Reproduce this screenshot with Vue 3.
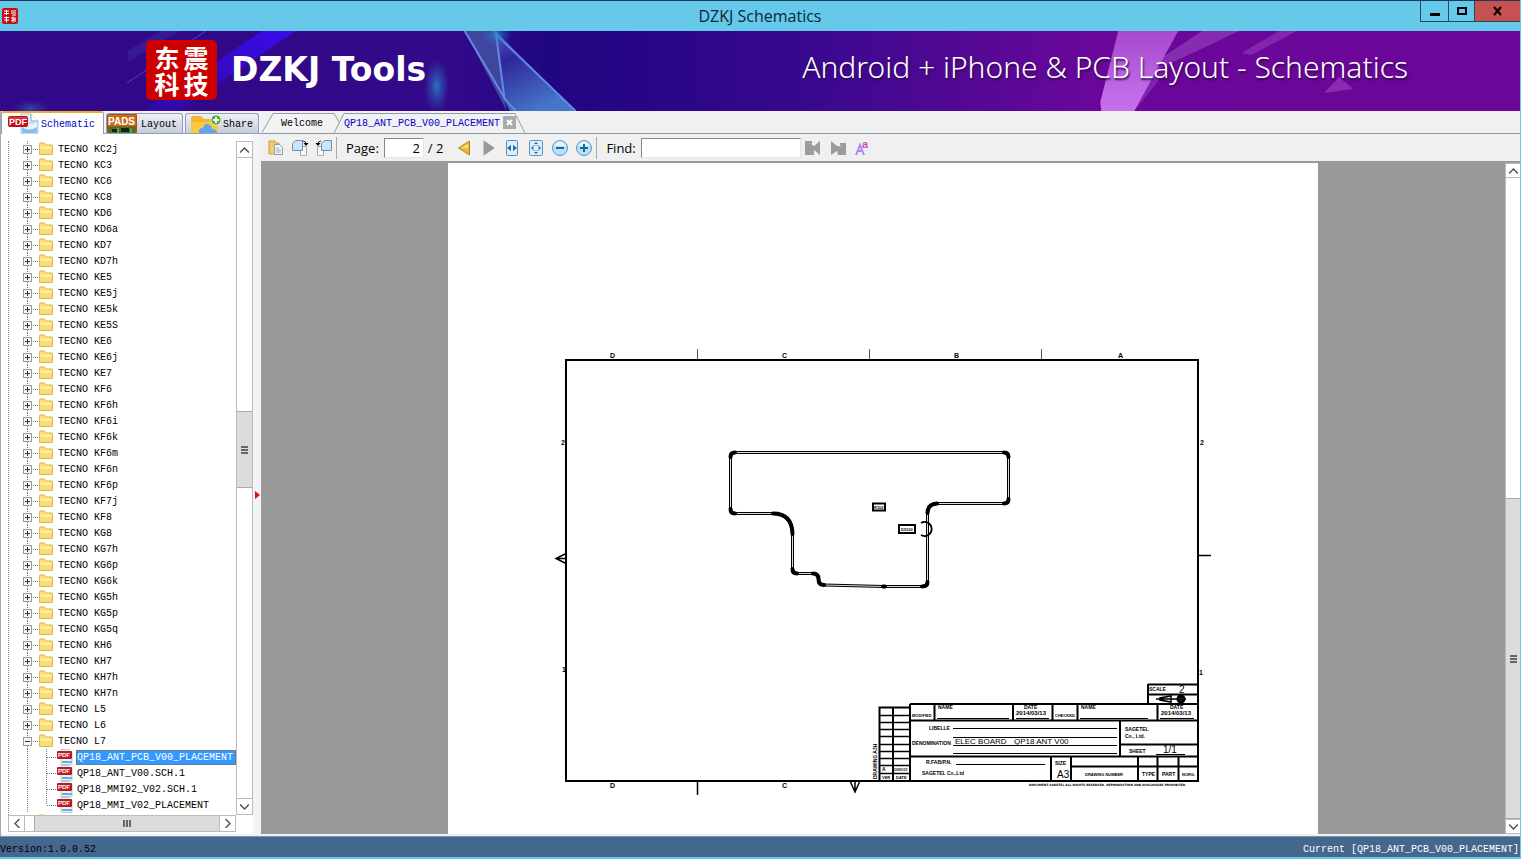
<script setup>
import { ref } from 'vue'

const folders = [
  'KC2j', 'KC3', 'KC6', 'KC8', 'KD6', 'KD6a', 'KD7', 'KD7h', 'KE5', 'KE5j', 'KE5k', 'KE5S', 'KE6',
  'KE6j', 'KE7', 'KF6', 'KF6h', 'KF6i', 'KF6k', 'KF6m', 'KF6n', 'KF6p', 'KF7j', 'KF8', 'KG8', 'KG7h',
  'KG6p', 'KG6k', 'KG5h', 'KG5p', 'KG5q', 'KH6', 'KH7', 'KH7h', 'KH7n', 'L5', 'L6', 'L7'
].map((name) => ({ name: 'TECNO ' + name, open: name === 'L7' }))

const files = ['QP18_ANT_PCB_V00_PLACEMENT', 'QP18_ANT_V00.SCH.1', 'QP18_MMI92_V02.SCH.1', 'QP18_MMI_V02_PLACEMENT']
const current = ref(files[0])
const page = ref('2')
const search = ref('')

const outline =
  'M735 452.5H1004Q1008.5 452.5 1008.5 457V499Q1008.5 503.5 1004 503.5H937Q927.5 504 927.5 514V582Q927.5 586.5 922 586.5H884L824 585Q818.500 585 818.500 579Q818.500 573.500 813 573.500H797Q792.500 573.500 792.500 569V534Q792 513.5 773 513.5H735Q730.500 513.5 730.500 509V457Q730.500 452.500 735 452.500Z'
const corners =
  'M1004 452.5Q1008.500 452.500 1008.500 457M1008.500 499Q1008.500 503.500 1004 503.500M937 503.500Q927.500 504 927.500 513M927.500 582Q927.500 586.5 922 586.5M883 586.5h2M824 585Q818.500 585 818.500 579Q818.500 573.500 813 573.500M797 573.500Q792.500 573.500 792.500 569M792.500 534Q792 513.5 773 513.5M735 513.5Q730.500 513.5 730.500 509M730.500 457Q730.500 452.500 735 452.500'
const revisionRows = [715, 722, 729, 736, 744, 751, 758, 765, 773]
</script>

<template>
  <div class="app">
    <header class="titlebar">
      <svg class="app-icon" viewBox="0 0 16 16" width="16" height="16">
        <rect width="16" height="16" rx="2" fill="#c01010" />
        <path d="M2 3h5M4.500 2v5M2 5.500h5M9 3h5M9 5h5M10 7h4M2 9.500h5M4.500 8.500v6M2 12h5M9 10h5M11 8.500v6M9 13l5-2M13 12v2" stroke="#fff" stroke-width="1" fill="none" />
      </svg>
      <h1>DZKJ Schematics</h1>
      <div class="window-buttons">
        <button class="min" aria-label="Minimize"><svg width="10" height="10"><path d="M0 7h10v3H0z" /></svg></button>
        <button class="max" aria-label="Maximize"><svg width="12" height="10"><path d="M2 2h8v6H2z" fill="none" stroke="#000" stroke-width="2" /></svg></button>
        <button class="close" aria-label="Close"><svg width="10" height="10"><path d="M1 1l7 8M8 1L1 9" fill="none" stroke="#000" stroke-width="2" /></svg></button>
      </div>
    </header>

    <div class="banner">
      <svg class="art" viewBox="0 0 1521 80" preserveAspectRatio="none">
        <defs>
          <linearGradient id="base">
            <stop offset="0" stop-color="#310888" /><stop offset=".3" stop-color="#320989" />
            <stop offset=".36" stop-color="#200681" /><stop offset=".42" stop-color="#270586" />
            <stop offset=".53" stop-color="#38088f" /><stop offset=".66" stop-color="#5a0896" />
            <stop offset=".72" stop-color="#6a079a" /><stop offset="1" stop-color="#6c0698" />
          </linearGradient>
          <linearGradient id="shard" x2=".5" y2="1">
            <stop offset="0" stop-color="#4b58be" /><stop offset=".35" stop-color="#30269b" /><stop offset="1" stop-color="#4576c8" />
          </linearGradient>
          <linearGradient id="beam" x2="0" y2="1">
            <stop offset="0" stop-color="#a749cc" /><stop offset="1" stop-color="#c873f0" />
          </linearGradient>
          <linearGradient id="ray" x1="1" x2="0" y2="1">
            <stop offset="0" stop-color="#3b0bef" /><stop offset="1" stop-color="#3408c0" stop-opacity=".5" />
          </linearGradient>
          <radialGradient id="glow"><stop offset="0" stop-color="#278fc6" stop-opacity=".8" /><stop offset="1" stop-color="#2a5dc0" stop-opacity="0" /></radialGradient>
        </defs>
        <rect width="1521" height="80" fill="url(#base)" />
        <path d="M262 0H296L178 80H143Z" fill="url(#ray)" />
        <path d="M160 0h20L128 31V20z" fill="#4b48ba" opacity=".25" />
        <path d="M206 0L127 52" stroke="#7067cc" opacity=".6" />
        <ellipse cx="437" cy="55" rx="13" ry="28" fill="url(#glow)" />
        <ellipse cx="31" cy="78" rx="19" ry="10" fill="url(#glow)" opacity=".6" />
        <path d="M465 0H496L507 80Z" fill="#40469e" />
        <path d="M496 0L576 80H510L505 69Z" fill="url(#shard)" />
        <path d="M465 0L506 69L516 80M496 0L505 69M496 3L576 80" stroke="#6588e4" stroke-width="2" fill="none" />
        <ellipse cx="497" cy="4" rx="16" ry="12" fill="url(#glow)" />
        <path d="M1203 0H1240L1155 40 1131 70 1150 35Z" fill="#9440bd" opacity=".65" />
        <path d="M1280 0H1298L1252 24 1242 22Z" fill="#963fbc" opacity=".55" />
        <path d="M1119 0H1179L1135 80H1102L1101 71Z" fill="url(#beam)" />
        <path d="M1102 72L1150 44 1170 36 1135 80H1102Z" fill="#bd6ae3" opacity=".3" />
        <path d="M1340 46L1325 62 1354 58Z" fill="#9d3fbf" opacity=".65" />
      </svg>
      <div class="seal"><span>东</span><span>震</span><span>科</span><span>技</span></div>
      <strong>DZKJ Tools</strong>
      <p>Android + iPhone &amp; PCB Layout - Schematics</p>
    </div>

    <main>
      <aside>
        <nav class="source-tabs">
          <button class="schematic active">
            <svg width="34" height="21" viewBox="0 0 34 21">
              <path d="M14 1h10l7 7v13H14z" fill="#e6f2fc" stroke="#a6c6df" /><path d="M24 1v7h7" fill="#fff" stroke="#7ba6c9" />
              <path d="M15 14q7 5 15 0v6H15z" fill="#88bee8" /><path d="M17 7h5M17 10h10" stroke="#9abfdd" />
              <rect x="1" y="3" width="20" height="11" rx="2" fill="#c30f18" /><path d="M2 4h18v3H2z" fill="#e5555a" opacity=".6" />
              <text x="2" y="12" font-size="9" font-weight="700" fill="#fff">PDF</text>
            </svg>
            <span>Schematic</span>
          </button>
          <button class="layout">
            <svg width="30" height="19" viewBox="0 0 30 19">
              <rect width="30" height="19" rx="1" fill="#a7550f" /><rect x="1" y="1" width="28" height="11" fill="#c56d17" />
              <text x="1" y="11" font-size="10" font-weight="700" fill="#fff">PADS</text>
              <path d="M2 13h26v6H2z" fill="#347b30" /><path d="M5 15h5v3H5zM14 14h8v4h-8z" fill="#17231a" /><path d="M11 14v5M24 14v5" stroke="#8cc35b" />
            </svg>
            <span>Layout</span>
          </button>
          <button class="share">
            <svg width="32" height="19" viewBox="0 0 32 19">
              <path d="M1 4q0-2 2-2h8l3 3h12q2 0 2 2v12H1z" fill="#f3b62c" /><path d="M1 8h27v11H1z" fill="#fac943" />
              <path d="M9 19q-1-5 4-5 2-6 7-3 2 2 2 4 5 0 5 4z" fill="#5ba8ed" />
              <circle cx="26" cy="6" r="5" fill="#49a63d" stroke="#d5efd0" /><path d="M26 3v6M23 6h6" stroke="#fff" stroke-width="2" />
            </svg>
            <span>Share</span>
          </button>
        </nav>
        <div class="tree-panel">
          <ul class="tree">
            <li v-for="folder in folders" :key="folder.name" class="folder">
              <button>
                <svg width="31" height="16" viewBox="0 0 31 16">
                  <path d="M4.500 0v4M4.500 13v3M10 8.500h6" stroke="#777" stroke-dasharray="1 1" />
                  <rect x=".5" y="4.500" width="8" height="8" fill="#f5f5f5" stroke="#999" />
                  <path :d="folder.open ? 'M2 8.500h5' : 'M2 8.500h5M4.500 6v5'" stroke="#333" />
                  <path d="M16.500 3q0-1 1-1h4l1 2h6q1 0 1 1v8.500h-13z" fill="#f8df74" stroke="#dbb94e" /><path d="M17.500 5h11v3h-11z" fill="#fff1a6" opacity=".7" />
                </svg>
                <span>{{ folder.name }}</span>
              </button>
            </li>
            <li v-for="(file, i) in files" :key="file" class="file">
              <button :class="{ selected: current === file }" @click="current = file">
                <svg width="53" height="16" viewBox="0 0 53 16">
                  <path d="M24 8.500h10" stroke="#777" stroke-dasharray="1 1" /><path d="M4.500 0v16" stroke="#777" stroke-dasharray="1 1" />
                  <path :d="i === files.length - 1 ? 'M23.500 0v8' : 'M23.500 0v16'" stroke="#777" stroke-dasharray="1 1" />
                  <path d="M38 .500h8l3 3v12H38z" fill="#e8f2fc" stroke="#b3cde4" /><path d="M39 13h10" stroke="#6faadb" stroke-width="2" />
                  <rect x="34" y="2" width="15" height="8" rx="1" fill="#bb1a1e" />
                  <text x="35" y="8" font-size="6" font-weight="700" fill="#fff">PDF</text>
                </svg>
                <span>{{ file }}</span>
              </button>
            </li>
            <li class="folder"><button><svg width="31" height="16" viewBox="0 0 31 16"><path d="M16 1h5l1 2h6v11H16z" fill="#f8df74" /></svg></button></li>
          </ul>
          <div class="scroll vertical tree-v">
            <button aria-label="Scroll up"><svg width="9" height="6"><path d="M0 5.500L4.500 1 9 5.500" /></svg></button>
            <div class="track before"></div>
            <div class="thumb"><i></i></div>
            <div class="track after"></div>
            <button aria-label="Scroll down"><svg width="9" height="6"><path d="M0 .500L4.500 5 9 .500" /></svg></button>
          </div>
          <div class="scroll horizontal">
            <button aria-label="Scroll left"><svg width="6" height="9"><path d="M5.500 0L1 4.500 5.500 9" /></svg></button>
            <div class="thumb"><i></i></div>
            <button aria-label="Scroll right"><svg width="6" height="9"><path d="M.500 0L5 4.500.500 9" /></svg></button>
          </div>
        </div>
        <button class="splitter" aria-label="Toggle sidebar"><svg width="6" height="8"><path d="M1 0l5 4-5 4z" fill="#e01010" /></svg></button>
      </aside>

      <section class="document">
        <nav class="doc-tabs">
          <button class="welcome">
            <svg width="80" height="21" viewBox="0 0 80 21"><path d="M0 20.500L11 1.500H72L80 15" fill="#f3f3f3" stroke="#8c9dac" /></svg>
            <span>Welcome</span>
          </button>
          <div class="placement">
            <svg width="194" height="21" viewBox="0 0 194 21"><path d="M0 21L10 1.500H181L191 21" fill="#f1f1f1" stroke="#8c9dac" /></svg>
            <button class="label">QP18_ANT_PCB_V00_PLACEMENT</button>
            <button class="x" aria-label="Close tab"><svg width="13" height="13"><rect width="13" height="13" fill="#aaa" /><path d="M4 4l5 5M9 4L4 9" stroke="#fff" stroke-width="2" /></svg></button>
          </div>
        </nav>

        <div class="toolbar">
          <button aria-label="Copy"><svg width="16" height="16"><path d="M1 1h6v2h4v11H1z" fill="#f2cb78" stroke="#c99c3e" /><path d="M6.500 4.500h5l3 3v7h-8z" fill="#f5f8fb" stroke="#8b9dac" /><path d="M8 8h3M8 10h5M8 12h5" stroke="#91aac0" /></svg></button>
          <button aria-label="Rotate right"><svg width="18" height="18"><path d="M9.500 7.500h6v9h-6z" fill="#f8f8f8" stroke="#a8a8a8" /><path d="M1.500 4.500l3-3h7v10h-10z" fill="#cae3f8" stroke="#718dab" /><path d="M12 2q3 0 3 3" fill="none" stroke="#222" /><path d="M12.500 4h5L15 7z" /></svg></button>
          <button aria-label="Rotate left"><svg width="18" height="18"><path d="M2.500 7.500h6v9h-6z" fill="#f8f8f8" stroke="#a8a8a8" /><path d="M6.500 4.500l3-3h7v10h-10z" fill="#cae3f8" stroke="#718dab" /><path d="M6 2Q3 2 3 5" fill="none" stroke="#222" /><path d="M.500 4h5L3 7z" /></svg></button>
          <i class="sep"></i>
          <label for="page">Page:</label>
          <input id="page" v-model="page" type="text" />
          <span class="total">/ 2</span>
          <button aria-label="Previous page"><svg width="16" height="16"><path d="M13.500 1v14L2.500 8z" fill="#e6bd3a" stroke="#ae8519" /><path d="M12 4v4H5z" fill="#f7e27b" /></svg></button>
          <button aria-label="Next page"><svg width="16" height="16"><path d="M4 1l10 7-10 7z" fill="#999" stroke="#999" /></svg></button>
          <button aria-label="Fit width"><svg width="14" height="16"><rect x="1.500" y=".500" width="11" height="15" rx="1" fill="#d9edfb" stroke="#5c92bf" /><path d="M6 5v6L2 8zM8 5v6l4-3z" fill="#216aab" /></svg></button>
          <button aria-label="Fit page"><svg width="16" height="16"><rect x="1.500" y=".500" width="13" height="15" rx="1" fill="#d9edfb" stroke="#5c92bf" /><path d="M6 4l2-2 2 2zM6 12l2 2 2-2zM5 6L3 8l2 2zM11 6l2 2-2 2z" fill="#216aab" /><path d="M5.500 5.500h5v5h-5z" fill="none" stroke="#6697bd" stroke-dasharray="1 1" /></svg></button>
          <button aria-label="Zoom out"><svg width="18" height="18"><circle cx="9" cy="9" r="7.500" fill="#b9e0f8" stroke="#6696b9" /><path d="M3 7q6-9 12 0z" fill="#e3f5ff" /><path d="M5 9h8" stroke="#146b9e" stroke-width="2" /></svg></button>
          <button aria-label="Zoom in"><svg width="18" height="18"><circle cx="9" cy="9" r="7.500" fill="#b9e0f8" stroke="#6696b9" /><path d="M3 7q6-9 12 0z" fill="#e3f5ff" /><path d="M5 9h8M9 5v8" stroke="#146b9e" stroke-width="2" /></svg></button>
          <i class="sep"></i>
          <label for="find">Find:</label>
          <input id="find" v-model="search" type="text" />
          <button aria-label="Find previous"><svg width="16" height="16"><path d="M0 1h7v4l2 1 6-5v14L9 10v5H0z" fill="#9c9c9c" /><path d="M5 3v1" stroke="#ddd" /></svg></button>
          <button aria-label="Find next"><svg width="16" height="16"><path d="M16 15V3h-6v3L7 6 1 1v14l6-4 1 4z" fill="#9c9c9c" /><path d="M10 5v2" stroke="#ddd" /></svg></button>
          <button aria-label="Match case"><svg width="18" height="20"><path d="M3 17L7 7 11 17M5 13h5" fill="none" stroke="#a48cf0" stroke-width="2" /><text x="9" y="10" font-size="11" font-weight="700" fill="#c750bd">a</text></svg></button>
        </div>

        <div class="viewer">
          <div class="sheet">
            <svg class="drawing" viewBox="448 163 870 671" width="870" height="671">
              <g fill="none" stroke="#000">
                <path d="M566 360H1198V781H566Z" stroke-width="2" />
                <path d="M697.500 349v10M869.500 349v10M1041.500 349v10" stroke="#555" />
                <path d="M697.500 782v13M1198 555.500h13M566 553.500l-10 5 10 5M557 558.500h9M850.500 782l4.500 10 4.500-10M855 782v8" stroke-width="1.500" />
                <path :d="outline" stroke-width="3" />
                <path :d="outline" stroke="#ddd" />
                <path :d="corners" stroke-width="4" stroke-linecap="round" />
                <path d="M921 523a7 7 0 1 1 0 12" stroke-width="2" />
                <path d="M873 503.500h12v7h-12zM899 525h16v8h-16z" stroke-width="2" />
                <path d="M910 704H1198M1148 684.500H1197M1148 694.500H1197M1148 684v19M910 720.500H1198M910 756.500H1198M910 704V781M934.500 704v16M1013 704v16M1052.500 704v16M1077.500 704v16M1157.500 704v16M1120 720v36M1120 744.500H1198M1051 756v25M1071 756v25M1071 766.500H1198M1138 756v25M1157.500 756v25M1178.500 756v25" stroke-width="2" />
                <path d="M937 718.500h72M1016 718.500h33M1080 718.500h68M1160 718.500h34M953 728.500h164M953 737.500h164M953 745.500h164M953 753.500h164M1156 754.500h29M956 764.500h89" />
                <path d="M879.500 781V707.500H910M893 707v74" stroke-width="2" />
                <path v-for="y in revisionRows" :key="y" :d="`M879 ${y}.500H910`" stroke-width="1.500" />
                <path d="M1171 696v6l-11-2v-2zM1156 699h30M1181 695v10" stroke-width="1.500" />
                <circle cx="1181" cy="699" r="3" stroke-width="3" />
              </g>
              <g class="cad">
                <g class="mark">
                  <text x="610" y="358">D</text><text x="782" y="358">C</text><text x="954" y="358">B</text><text x="1118" y="358">A</text>
                  <text x="610" y="788">D</text><text x="782" y="788">C</text>
                  <text x="561" y="445">2</text><text x="1200" y="445">2</text><text x="562" y="672">1</text><text x="1199" y="675">1</text>
                </g>
                <g class="dense">
                  <text x="874" y="509">R102</text><text x="901" y="531">D5100</text>
                  <text x="912" y="717">MODIFIED</text><text x="1055" y="717">CHECKED</text><text x="1182" y="776">NORG.</text>
                  <text x="882" y="779">VER</text><text x="896" y="779">DATE</text><text x="1085" y="776">DRAWING NUMBER</text>
                </g>
                <g class="tiny">
                  <text x="929" y="730">LIBELLE</text><text x="912" y="745">DENOMINATION</text>
                  <text x="1149" y="691">SCALE</text><text x="1129" y="753">SHEET</text>
                  <text x="926" y="764">R.FAB/P.N.</text><text x="1055" y="765">SIZE</text>
                  <text x="882" y="771">A</text>
                  <text x="1142" y="776">TYPE</text><text x="1162" y="776">PART</text>
                  <text x="938" y="709">NAME</text><text x="1081" y="709">NAME</text><text x="1024" y="709">DATE</text><text x="1170" y="709">DATE</text>
                  <text transform="translate(877 779) rotate(-90)">DRAWING A3H</text>
                </g>
                <text class="micro" x="894" y="771">2008/1/23</text>
                <text class="notice" x="1029" y="786">DOCUMENT SAGETEL ALL RIGHTS RESERVED. REPRODUCTION AND DISCLOSURE PROHIBITED</text>
                <g class="date"><text x="1016" y="715">2014/03/13</text><text x="1161" y="715">2014/03/13</text></g>
                <g class="company"><text x="1125" y="731">SAGETEL</text><text x="1125" y="738">Co., Ltd.</text><text x="922" y="775">SAGETEL Co.,Ltd</text></g>
                <text class="name" x="955" y="744">ELEC BOARD</text><text class="name" x="1014" y="744">QP18 ANT V00</text>
                <g class="value"><text x="1179" y="693">2</text><text x="1163" y="753">1/1</text><text x="1057" y="778">A3</text></g>
              </g>
            </svg>
          </div>
          <div class="scroll vertical doc-v">
            <button aria-label="Page up"><svg width="9" height="6"><path d="M0 5.500L4.500 1 9 5.500" /></svg></button>
            <div class="track before"></div>
            <div class="thumb"><i></i></div>
            <button aria-label="Page down"><svg width="9" height="6"><path d="M0 .500L4.500 5 9 .500" /></svg></button>
          </div>
        </div>
      </section>
    </main>

    <footer><span>Version:1.0.0.52</span><span class="status">Current [{{ current }}]</span></footer>
  </div>
</template>

<style>
html, body { margin: 0; overflow: hidden; }
</style>

<style scoped>
* { box-sizing: border-box; }
.app { height: 100vh; display: grid; grid-template-rows: 31px 80px minmax(0, 1fr) 23px; grid-template-columns: minmax(0, 1fr); background: #f0f0f0; border-right: 1px solid #65cae9; font: 10px/16px "Liberation Mono", monospace; color: #000; }
button { font: inherit; color: inherit; margin: 0; padding: 0; border: 0; background: none; display: flex; align-items: center; justify-content: center; white-space: nowrap; }
svg { display: block; flex: none; }
svg text { font-family: "Liberation Sans", sans-serif; }

.titlebar { display: grid; grid-template-columns: 1fr auto 1fr; align-items: center; background: #66c9e9; border-top: 1px solid #173d59; }
.app-icon { margin-left: 2px; }
h1 { margin: 0; font: 16px/26px "Open Sans", sans-serif; color: #0b2638; }
.window-buttons { display: flex; justify-self: end; align-self: start; }
.window-buttons button { height: 21px; border: 1px solid #234b5e; border-top: 0; border-right: 0; }
.min { width: 28px; }
.max { width: 26px; }
.window-buttons .close { width: 46px; background: #c75050; }

.banner { position: relative; display: flex; align-items: center; padding: 0 112px 0 146px; overflow: hidden; color: #fff; }
.art { position: absolute; inset: 0; width: 100%; height: 100%; }
.seal { position: relative; width: 71px; height: 60px; margin: 0 14px 2px 0; border-radius: 5px; background: #cd0000; display: grid; grid-template: 25px 25px / 25px 25px; gap: 1px 4px; place-content: center; font: 700 25px/25px "Noto Sans CJK SC", sans-serif; }
.banner strong { position: relative; font: 700 33px/40px "DejaVu Sans", sans-serif; margin-bottom: 2px; }
.banner p { position: relative; margin: 0 0 8px auto; font: 30px/36px "Noto Sans", sans-serif; font-weight: 300; white-space: nowrap; text-shadow: 1px 2px 2px #2c0a4c; }

main { display: grid; grid-template-columns: 261px minmax(0, 1fr); min-height: 0; }
aside { position: relative; display: flex; flex-direction: column; min-height: 0; background: #f2f3f6; border-left: 1px solid #9badb7; }
.source-tabs { height: 23px; display: flex; align-items: flex-end; gap: 2px; border-bottom: 1px solid #8fa6b6; }
.source-tabs button { height: 20px; border: 1px solid #8fa0b6; border-bottom: 0; border-radius: 3px 3px 0 0; background: linear-gradient(#f0f0f5, #c7cbdc); justify-content: flex-start; overflow: hidden; }
.source-tabs span, .doc-tabs span, .doc-tabs .label { padding-top: 2px; }
.source-tabs .schematic { width: 103px; height: 23px; margin-bottom: -1px; border-top: 2px solid #f6a828; background: #fff; color: #0000cd; padding-left: 5px; }
.layout { width: 77px; gap: 4px; }
.source-tabs .share { width: 74px; padding-left: 4px; gap: 1px; }
.tree-panel { flex: 1; min-height: 0; width: 252px; margin-bottom: 2px; padding: 7px 0 2px 7px; background: #fff; display: grid; grid-template: minmax(0, 1fr) 17px / minmax(0, 1fr) 17px; }
.tree { margin: 0; padding: 0; list-style: none; overflow: hidden; border-left: 1px dotted #888; }
.tree li { height: 16px; padding-left: 14px; }
.tree button { height: 16px; }
.folder span { padding: 1px 0 0 4px; }
.file span { height: 15px; line-height: 15px; padding: 0 3px 0 1px; }
.selected span { background: #3399ff; color: #fff; outline: 1px dotted #9b601a; outline-offset: -1px; }

.scroll { display: flex; }
.scroll button { flex: none; background: #fff; border: 1px solid #bbb; }
.scroll path { fill: none; stroke: #555; stroke-width: 1.5; }
.vertical { flex-direction: column; border: solid #bbb; border-width: 0 1px; background: #fff; }
.vertical button { height: 17px; border-width: 1px 0; }
.thumb { display: flex; align-items: center; justify-content: center; background: #dcdcdc; border: 1px solid #aaa; }
.vertical .thumb { border-width: 1px 0; }
.vertical i { width: 7px; height: 8px; background: repeating-linear-gradient(#666 0 2px, #dcdcdc 2px 3px); }
.tree-v .before { flex: 253; }
.tree-v .thumb { flex: 75; }
.tree-v .after { flex: 310; }
.horizontal { border: solid #bbb; border-width: 1px 0; }
.horizontal button { width: 17px; border-width: 0 1px; }
.horizontal .thumb { flex: 1; margin-left: 9px; border-width: 0 0 0 1px; }
.horizontal i { width: 8px; height: 7px; background: repeating-linear-gradient(90deg, #666 0 2px, #dcdcdc 2px 3px); }
.splitter { position: absolute; right: 1px; top: 53%; margin-top: -4px; width: 6px; height: 8px; }

.document { min-width: 0; min-height: 0; display: flex; flex-direction: column; }
.doc-tabs { height: 23px; flex: none; display: flex; align-items: flex-end; border-bottom: 1px solid #849ba8; background: #f0f0f0; }
.welcome, .placement { position: relative; height: 21px; display: flex; align-items: center; }
.doc-tabs > * > svg { position: absolute; left: 0; top: 0; }
.welcome { width: 72px; margin-left: 1px; padding-left: 8px; }
.welcome span, .placement button { position: relative; }
.placement { padding-left: 10px; gap: 3px; color: #0000cd; }
.toolbar { height: 29px; flex: none; display: flex; align-items: center; padding-left: 3px; background: #f0f0f0; border-bottom: 2px solid #999; font: 13px/18px "Open Sans", sans-serif; }
.toolbar button { width: 24px; height: 24px; flex: none; }
.sep { width: 1px; height: 22px; background: #aaa; }
.toolbar label { padding: 0 5px 0 9px; }
.toolbar input { height: 20px; margin: 0; padding: 0 3px; border: 1px solid #8a8a8a; border-color: #888 #e5e5e5 #e5e5e5 #888; border-radius: 0; font: inherit; background: #fff; outline: 0; }
#page { width: 40px; text-align: right; }
#find { width: 160px; }
.total { padding: 0 9px 0 4px; }
#find + button { margin-right: 1px; }
.viewer { flex: 1; min-height: 0; display: grid; grid-template-columns: minmax(0, 1fr) 15px; background: #999; margin-bottom: 2px; }
.sheet { width: 870px; max-width: 100%; margin: 0 auto; background: #fff; overflow: hidden; }
.doc-v { border-width: 0 0 0 1px; }
.doc-v button { height: 15px; }
.doc-v .before { flex: 321; }
.doc-v .thumb { flex: 320; }

.cad text { font-family: "Liberation Sans", sans-serif; fill: #000; font-weight: 700; }
.cad .mark text { font-size: 7px; }
.cad .dense text { font-size: 4px; }
.cad .tiny text { font-size: 5px; }
.cad text.micro { font-size: 3px; }
.cad text.notice { font-family: "DejaVu Sans", sans-serif; font-size: 3px; }
.cad .date text { font-size: 6px; }
.cad .company text { font-size: 5px; }
.cad text.name { font-size: 8px; font-weight: 400; }
.cad .value text { font-size: 10px; font-weight: 400; }

footer { display: flex; align-items: center; justify-content: space-between; background: #44678d; border-top: 1px solid #7597b4; border-bottom: 2px solid #65cae9; padding-top: 5px; }
.status { color: #fff; padding-right: 1px; }
</style>
